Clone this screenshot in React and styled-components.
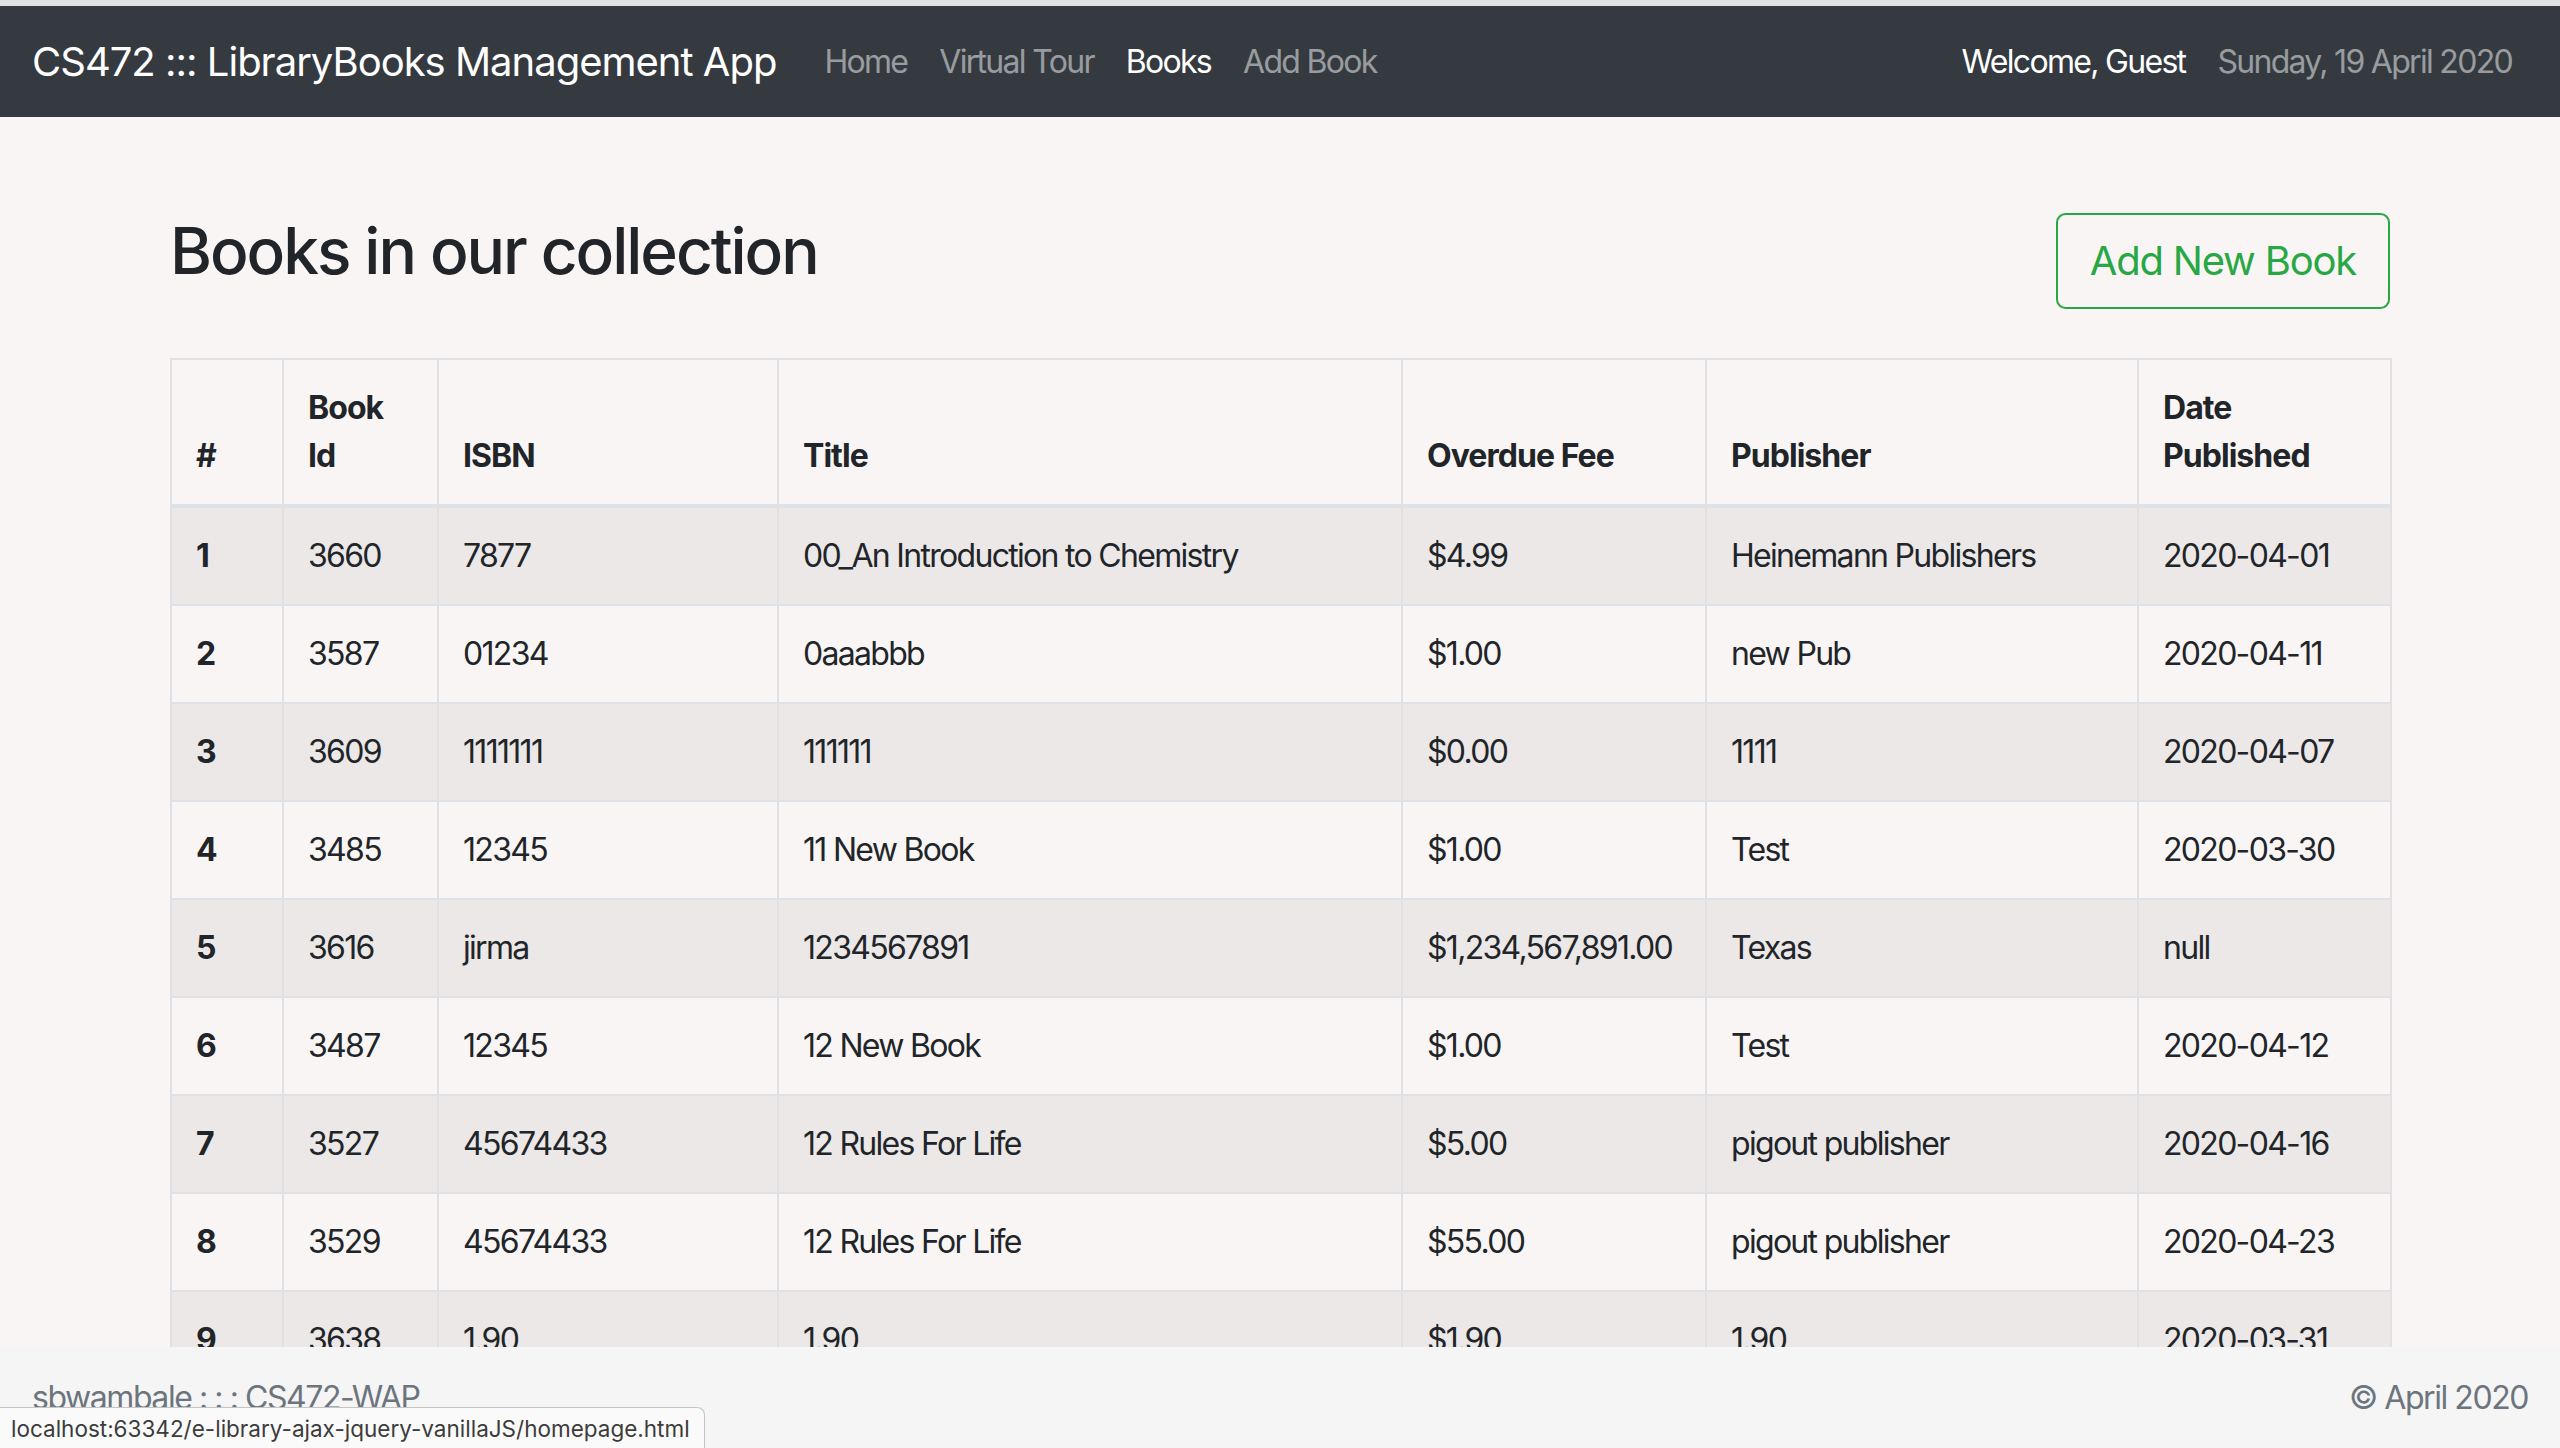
import React from 'react';
import styled, { createGlobalStyle } from 'styled-components';

const GlobalStyle = createGlobalStyle`
  html, body {
    margin: 0;
    padding: 0;
  }
  body {
    font-family: Inter, "Noto Sans", "Liberation Sans", sans-serif;
    color: #212529;
    background-color: #f8f5f4;
    letter-spacing: -0.04em;
  }
  * {
    box-sizing: border-box;
  }
`;

const Page = styled.div`
  height: 100vh;
  display: flex;
  flex-direction: column;
  position: relative;
  overflow: hidden;
`;

const TopEdge = styled.div`
  height: 6px;
  flex: none;
  background-color: #e2e2e2;
`;

const Navbar = styled.nav`
  height: 111px;
  flex: none;
  display: flex;
  align-items: center;
  padding: 0 32px;
  background-color: #343a40;
`;

const Brand = styled.a`
  font-size: 40px;
  line-height: 60px;
  letter-spacing: -0.025em;
  color: #fff;
  margin-right: 32px;
  white-space: nowrap;
`;

const NavList = styled.div`
  display: flex;
  align-items: center;
`;

const NavItem = styled.a`
  font-size: 32px;
  line-height: 48px;
  letter-spacing: -0.053em;
  padding: 0 16px;
  white-space: nowrap;
  color: ${p => (p.$active ? '#fff' : 'rgba(255, 255, 255, 0.5)')};
`;

const NavRight = styled(NavList)`
  margin-left: auto;
`;

const Main = styled.main`
  flex: 1;
  overflow: hidden;
`;

const Container = styled.div`
  width: 2220px;
  margin: 0 auto;
  padding-top: 96px;
`;

const HeaderRow = styled.div`
  display: flex;
  justify-content: space-between;
  align-items: flex-start;
`;

const Title = styled.h2`
  margin: 0 0 16px;
  font-size: 64px;
  font-weight: 500;
  line-height: 1.2;
  letter-spacing: -0.032em;
`;

const OutlineButton = styled.button`
  font-family: inherit;
  font-size: 40px;
  line-height: 60px;
  letter-spacing: -0.03em;
  padding: 16px 32px;
  color: #28a745;
  background: transparent;
  border: 2px solid #28a745;
  border-radius: 9.6px;
  cursor: pointer;
`;

const Table = styled.table`
  width: 100%;
  margin-top: 49px;
  border-collapse: collapse;
  table-layout: fixed;
  font-size: 32px;
  line-height: 48px;

  tbody tr:nth-child(odd) {
    background-color: rgba(0, 0, 0, 0.05);
  }
`;

const Col = styled.col`
  width: ${p => p.$w}px;
`;

const Th = styled.th`
  padding: 24px;
  text-align: left;
  font-weight: 700;
  letter-spacing: -0.03em;
  vertical-align: ${p => (p.$row ? 'top' : 'bottom')};
  border: 2px solid #dee2e6;
  border-bottom-width: ${p => (p.$row ? 2 : 4)}px;
`;

const Td = styled.td`
  padding: 24px;
  vertical-align: top;
  letter-spacing: -0.053em;
  border: 2px solid #dee2e6;
  white-space: nowrap;
`;

const Footer = styled.footer`
  height: 101px;
  flex: none;
  display: flex;
  align-items: center;
  justify-content: space-between;
  padding: 0 32px;
  background-color: #f5f5f5;
  color: #6c757d;
  font-size: 32px;
  letter-spacing: -0.045em;
`;

const StatusTip = styled.div`
  position: absolute;
  left: 0;
  bottom: 0;
  height: 41px;
  padding: 0 14px 0 11px;
  display: flex;
  align-items: center;
  font-size: 22.5px;
  letter-spacing: 0;
  color: #3c3c3c;
  background-color: #fafafa;
  border: 1px solid #c4c4c4;
  border-left: none;
  border-bottom: none;
  border-top-right-radius: 8px;
  white-space: nowrap;
`;

const columns = [
  { label: '#', w: 112 },
  { label: 'Book Id', w: 155 },
  { label: 'ISBN', w: 340 },
  { label: 'Title', w: 624 },
  { label: 'Overdue Fee', w: 304 },
  { label: 'Publisher', w: 432 },
  { label: 'Date Published', w: 253 },
];

const books = [
  ['3660', '7877', '00_An Introduction to Chemistry', '$4.99', 'Heinemann Publishers', '2020-04-01'],
  ['3587', '01234', '0aaabbb', '$1.00', 'new Pub', '2020-04-11'],
  ['3609', '1111111', '111111', '$0.00', '1111', '2020-04-07'],
  ['3485', '12345', '11 New Book', '$1.00', 'Test', '2020-03-30'],
  ['3616', 'jirma', '1234567891', '$1,234,567,891.00', 'Texas', 'null'],
  ['3487', '12345', '12 New Book', '$1.00', 'Test', '2020-04-12'],
  ['3527', '45674433', '12 Rules For Life', '$5.00', 'pigout publisher', '2020-04-16'],
  ['3529', '45674433', '12 Rules For Life', '$55.00', 'pigout publisher', '2020-04-23'],
  ['3638', '1.90', '1.90', '$1.90', '1.90', '2020-03-31'],
];

export default function App() {
  return (
    <Page>
      <GlobalStyle />
      <TopEdge />
      <Navbar>
        <Brand>CS472 ::: LibraryBooks Management App</Brand>
        <NavList>
          <NavItem>Home</NavItem>
          <NavItem>Virtual Tour</NavItem>
          <NavItem $active>Books</NavItem>
          <NavItem>Add Book</NavItem>
        </NavList>
        <NavRight>
          <NavItem $active>Welcome, Guest</NavItem>
          <NavItem>Sunday, 19 April 2020</NavItem>
        </NavRight>
      </Navbar>

      <Main>
        <Container>
          <HeaderRow>
            <Title>Books in our collection</Title>
            <OutlineButton>Add New Book</OutlineButton>
          </HeaderRow>

          <Table>
            <colgroup>
              {columns.map(c => (
                <Col key={c.label} $w={c.w} />
              ))}
            </colgroup>
            <thead>
              <tr>
                {columns.map(c => (
                  <Th key={c.label}>{c.label}</Th>
                ))}
              </tr>
            </thead>
            <tbody>
              {books.map((b, i) => (
                <tr key={i}>
                  <Th $row>{i + 1}</Th>
                  {b.map((cell, j) => (
                    <Td key={j}>{cell}</Td>
                  ))}
                </tr>
              ))}
            </tbody>
          </Table>
        </Container>
      </Main>

      <Footer>
        <span>sbwambale : : : CS472-WAP</span>
        <span>© April 2020</span>
      </Footer>

      <StatusTip>localhost:63342/e-library-ajax-jquery-vanillaJS/homepage.html</StatusTip>
    </Page>
  );
}
